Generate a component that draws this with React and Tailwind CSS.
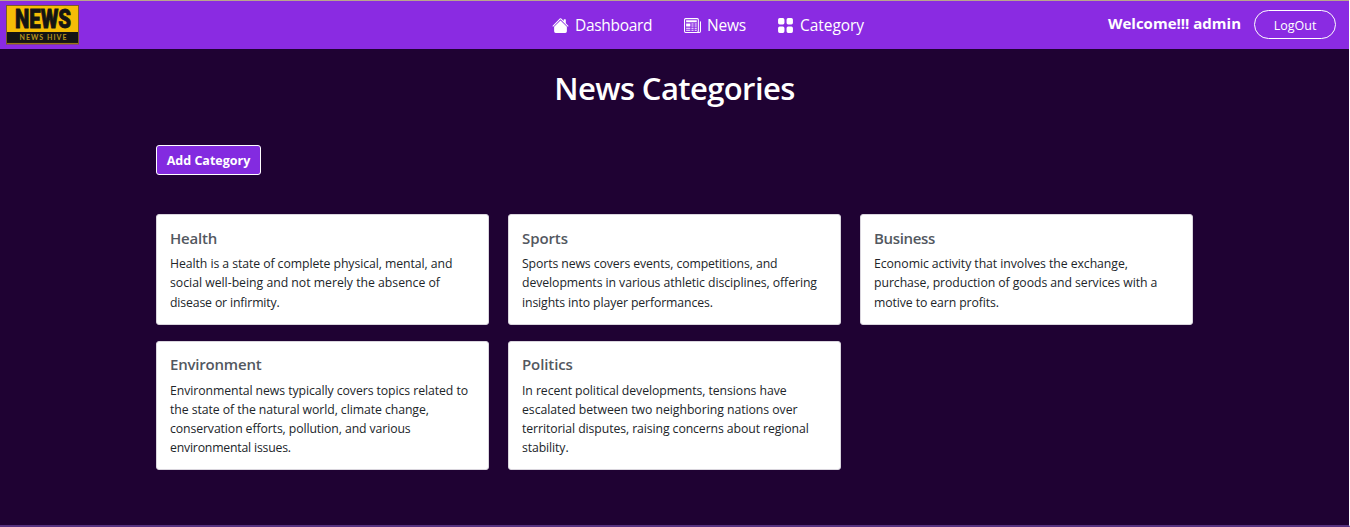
import { BsHouseFill, BsNewspaper, BsGridFill } from "react-icons/bs";

const categories = [
  {
    name: "Health",
    nameClass: "tracking-[-0.2px]",
    lines: [
      ["Health is a state of complete physical, mental, and", "tracking-[-0.07px]"],
      ["social well-being and not merely the absence of", "tracking-[-0.01px]"],
      ["disease or infirmity.", "tracking-[-0.14px]"],
    ],
  },
  {
    name: "Sports",
    nameClass: "tracking-[-0.1px]",
    lines: [
      ["Sports news covers events, competitions, and", "tracking-[-0.1px]"],
      ["developments in various athletic disciplines, offering", "tracking-[-0.07px]"],
      ["insights into player performances.", "tracking-[-0.11px]"],
    ],
  },
  {
    name: "Business",
    nameClass: "tracking-[-0.35px]",
    lines: [
      ["Economic activity that involves the exchange,", "tracking-[-0.06px]"],
      ["purchase, production of goods and services with a", "tracking-[-0.06px]"],
      ["motive to earn profits.", "tracking-[-0.1px]"],
    ],
  },
  {
    name: "Environment",
    nameClass: "tracking-[-0.2px]",
    lines: [
      ["Environmental news typically covers topics related to", "tracking-[-0.07px]"],
      ["the state of the natural world, climate change,", "tracking-[-0.07px]"],
      ["conservation efforts, pollution, and various", "tracking-[-0.1px]"],
      ["environmental issues.", "tracking-[-0.19px]"],
    ],
  },
  {
    name: "Politics",
    nameClass: "tracking-[-0.1px]",
    lines: [
      ["In recent political developments, tensions have", "tracking-[-0.07px]"],
      ["escalated between two neighboring nations over", "tracking-[-0.04px]"],
      ["territorial disputes, raising concerns about regional", "tracking-[-0.09px]"],
      ["stability.", "tracking-[-0.1px]"],
    ],
  },
];

function Logo() {
  return (
    <svg width="73" height="40" viewBox="0 0 73 40" className="block shrink-0 overflow-visible">
      <rect x="0.5" y="1.5" width="72" height="38.5" fill="#f5bd06" stroke="#7a5a2c" />
      <rect x="1" y="28" width="71" height="11" fill="#141414" />
      <path d="M1 39.4h71" stroke="#8a6c10" strokeWidth="0.7" />
      <text
        x="9"
        y="24"
        textLength="56"
        lengthAdjust="spacingAndGlyphs"
        fontFamily="Roboto, sans-serif"
        fontWeight="900"
        fontSize="25"
        fill="#141414"
        stroke="#141414"
        strokeWidth="0.8"
      >
        NEWS
      </text>
      <text
        x="13.5"
        y="35.8"
        textLength="47"
        fontFamily="Lato, sans-serif"
        fontWeight="700"
        fontSize="7"
        fill="#b8961e"
      >
        NEWS HIVE
      </text>
    </svg>
  );
}

function NavItem({ icon: Icon, label, className }) {
  return (
    <a className="flex items-center gap-1.5">
      <Icon className="mb-px size-[17px]" />
      <span className={className}>{label}</span>
    </a>
  );
}

function CategoryCard({ name, nameClass, lines }) {
  return (
    <article className="rounded-[3px] border border-[#d9d5dd] bg-white px-[13px] pt-[13.4px] pb-[11.8px]">
      <h2 className={`mb-[6.6px] text-[15px] leading-[19px] font-semibold text-[#53585f] ${nameClass}`}>{name}</h2>
      <p className="text-[12.25px] leading-[19.2px] text-[#212529]">
        {lines.map(([text, tracking]) => (
          <span key={text} className={`block whitespace-nowrap ${tracking}`}>
            {text}
          </span>
        ))}
      </p>
    </article>
  );
}

export default function App() {
  return (
    <div className="flex h-[527px] w-[1350px] flex-col overflow-hidden border-r border-b-2 border-r-white border-b-[#56327f] bg-[#1f0233] font-['Open_Sans','Noto_Sans',sans-serif] text-white">
      <header className="grid h-[49px] shrink-0 grid-cols-[552px_1fr_auto] border-t border-[#b9a68d] bg-[#8a2be2]">
        <div className="pt-[3px] pl-1.5">
          <Logo />
        </div>
        <nav className="flex h-[49px] items-center text-[15.5px]">
          <div className="w-[132px]">
            <NavItem icon={BsHouseFill} label="Dashboard" className="tracking-[-0.3px]" />
          </div>
          <div className="w-[93px]">
            <NavItem icon={BsNewspaper} label="News" className="tracking-[-0.2px]" />
          </div>
          <NavItem icon={BsGridFill} label="Category" className="tracking-[-0.05px]" />
        </nav>
        <div className="flex items-start pr-[13px]">
          <span className="mt-2.5 mr-[13px] text-[15px] leading-6 font-bold">Welcome!!! admin</span>
          <button className="mt-[9px] h-[29px] w-[82px] rounded-full border border-white pt-px text-[12.5px] leading-[27px]">
            LogOut
          </button>
        </div>
      </header>

      <main className="flex flex-col">
        <h1 className="mt-5 text-center text-[31px] leading-[38px] font-semibold tracking-[-0.6px]">News Categories</h1>
        <div className="mx-auto mt-[38px] w-[1037px]">
          <button className="h-[30px] w-[105px] rounded-[3px] border border-white bg-[#832be0] pt-0.5 text-[12.5px] leading-[26px] font-bold whitespace-nowrap">
            Add Category
          </button>
          <section className="mt-[39.2px] grid grid-cols-[333px_333px_333px] items-start gap-x-[19px] gap-y-4">
            {categories.map((category) => (
              <CategoryCard key={category.name} {...category} />
            ))}
          </section>
        </div>
      </main>
    </div>
  );
}
